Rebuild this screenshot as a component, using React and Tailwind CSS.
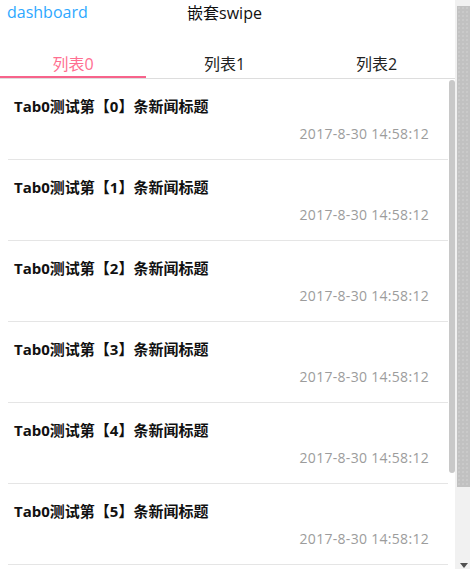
import React from 'react'

const font = { fontFamily: '"Open Sans", "Noto Sans CJK SC", sans-serif' }

const tabs = ['列表0', '列表1', '列表2']
const news = [0, 1, 2, 3, 4, 5].map((i) => ({
  id: i,
  title: `Tab0测试第【${i}】条新闻标题`,
  time: '2017-8-30 14:58:12',
}))

const NewsItem = ({ item }) => (
  <div className="ml-[8px] mr-[1px] pl-[6px] pr-[19px] pt-[17px] pb-[15px] border-b border-[#e5e5e5]">
    <div className="text-[15px] leading-[20px] font-bold text-[#111]">{item.title}</div>
    <div className="mt-[8px] text-[14px] leading-[20px] tracking-[0.3px] text-[#9c9c9c] text-right">{item.time}</div>
  </div>
)

const App = () => {
  return (
    <div className="h-[569px] w-[470px] flex overflow-hidden bg-white" style={font}>
      <div className="w-[455px] flex flex-col">
        {/* шапка */}
        <div className="h-[26px] flex items-center relative pr-[6px]">
          <span className="absolute left-[7px] top-0 text-[16px] leading-[24px] text-[#2ea8ff]">dashboard</span>
          <span className="mx-auto text-[16px] leading-[24px] text-[#111]">嵌套swipe</span>
        </div>

        {/* вкладки */}
        <div className="grid grid-cols-[146px_157px_147px] border-b border-[#dddddd]">
          {tabs.map((t, i) => (
            <div
              key={t}
              className={`pt-[28px] pb-[2px] text-center text-[16px] leading-[20px] border-b-2 ${
                i === 0 ? 'border-[#f7638b] text-[#ff6f91]' : 'border-transparent text-[#222]'
              }`}
            >
              {t}
            </div>
          ))}
        </div>

        {/* список */}
        <div className="flex-1 flex overflow-hidden">
          <div className="flex-1">
            {news.map((item) => (
              <NewsItem key={item.id} item={item} />
            ))}
          </div>
          <div className="w-[6px] pt-[1px]">
            <div className="h-[393px] bg-[#c8c8c8] rounded-[3px]"></div>
          </div>
        </div>
      </div>

      {/* полоса прокрутки страницы */}
      <div className="w-[15px] bg-[#f1f1f1] flex flex-col pl-[2px]">
        <div className="h-[6px]"></div>
        <div className="h-[481px] bg-[#c1c1c1] bg-[radial-gradient(#d2d2d2_0.6px,transparent_0.8px)] bg-[length:4px_4px]"></div>
        <div className="flex-1 flex items-end justify-center pb-[1px]">
          <svg width="8" height="5" viewBox="0 0 8 5">
            <path d="M0 0h8L4 5z" fill="#505050" />
          </svg>
        </div>
      </div>
    </div>
  )
}

export default App
